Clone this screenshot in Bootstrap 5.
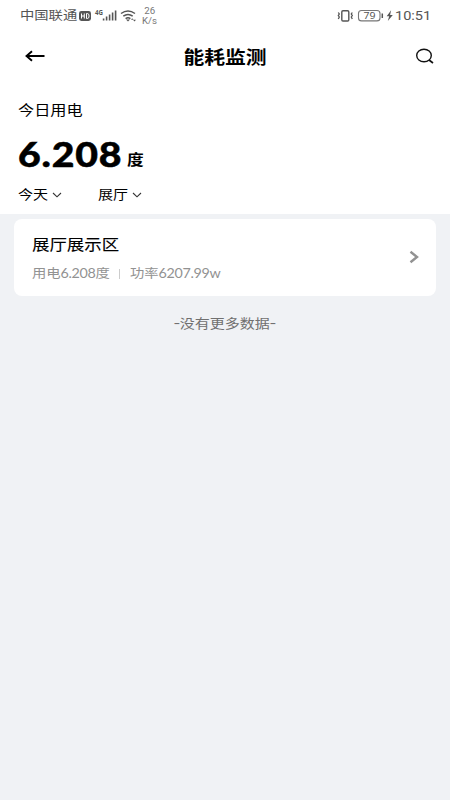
<!DOCTYPE html>
<html lang="zh-CN">
<head>
<meta charset="utf-8">
<meta name="viewport" content="width=device-width, initial-scale=1">
<title>能耗监测</title>
<link href="https://cdn.jsdelivr.net/npm/bootstrap@5.3.0/dist/css/bootstrap.min.css" rel="stylesheet">
<style>
body{background:#f0f2f5;font-family:Lato,"Noto Sans CJK SC",sans-serif;color:#000;min-height:800px;overflow:hidden}
svg{display:block;flex:none}
.wide{display:inline-block;white-space:nowrap;transform:scaleX(1.155);transform-origin:left center;line-height:1}
.wide-center{transform-origin:center}
.status{height:31px;padding-left:20px;padding-right:20px;color:#555;font-family:"Noto Sans","Noto Sans CJK SC",sans-serif}
.carrier{width:58px;font-size:12.4px;padding-top:2px}
.speed{width:14px;font-family:Roboto,sans-serif;font-size:8.4px;color:#777;margin-left:3px}
.speed span{line-height:10px}
.clock-box{font-family:Roboto,sans-serif;width:35px;font-size:12.6px;padding-top:2px}
.titlebar{height:49px;padding:1px 15px 0 25px}
.titlebar h1{font-size:18px;font-weight:700;margin:1px 11px 0 0}
.summary{height:133.5px;padding:21px 18px 0}
.caption-text{font-size:14px;height:18px;line-height:18px}
.summary .caption-text{display:block;width:60px}
.reading{height:42px;margin-top:13px}
.figure-num{font-size:35px;font-weight:900;width:108.5px;line-height:42px;letter-spacing:.7px;transform:scaleX(1.12);-webkit-text-stroke:.5px}
.unit{font-size:14.5px;font-weight:700;line-height:16px;margin-bottom:6px}
.filters{height:20px;margin-top:11px;font-size:13px}
.filter-label{width:34px}
.filter{width:80px}
.area-card{margin:5px 14px 0;height:77.5px;border-radius:8px;padding:0 17px 0 18px}
.area-name{font-size:15.1px;height:20px;line-height:20px;-webkit-text-stroke:.1px}
.meta{font-size:12.4px;color:#929292;margin-top:9px;height:18px}
.meta .energy{width:87px}
.meta .wide{display:block}
.num{letter-spacing:-.3px}
.rule{width:1px;height:10px;background:#ccc;margin-right:10px}
.end-note{font-size:13px;color:#707070;margin-top:17.5px;height:18px}
.dash{display:inline-block;transform:scaleX(1.3)}
</style>
<script src="https://cdn.jsdelivr.net/npm/bootstrap@5.3.0/dist/js/bootstrap.bundle.min.js"></script>
</head>
<body>
<header class="bg-white">
  <div class="status d-flex align-items-center">
    <div class="carrier"><span class="wide">中国联通</span></div>
    <svg width="62" height="18" viewBox="78 6.5 62 18">
      <rect x="79" y="10.5" width="12" height="10" rx="2.4" fill="#555"/>
      <path d="M81.5 13v5M84.3 13v5M81.5 15.5h2.8M86.5 13v5h.8q1.8 0 1.8-2.5t-1.8-2.5z" fill="none" stroke="#fff"/>
      <text x="95" y="14" font-size="6.5" font-weight="700" fill="#555" textLength="8" lengthAdjust="spacingAndGlyphs">4G</text>
      <path d="M103.6 18v2M106.6 16v4M109.6 14v6M112.6 12v8M115.6 10v10" stroke="#555" stroke-width="1.6"/>
      <g fill="none" stroke="#555" stroke-width="1.5"><path d="M121 13q7-5 14 0M123.3 15.6q4.7-3.4 9.4 0M125.6 18.1q2.4-1.8 4.8 0"/></g>
      <path d="M126 19h4l-2 2zM131 19.3l1.2-1.5 1.2 1.5zM133 19.3h3l-1.5 1.6z" fill="#555"/>
    </svg>
    <div class="speed d-flex flex-column align-items-center me-auto"><span class="wide wide-center">26</span><span class="wide wide-center">K/s</span></div>
    <svg width="58" height="18" viewBox="336.5 6.5 58 18">
      <rect x="341.3" y="10.3" width="7" height="10.2" rx="1.2" fill="none" stroke="#555" stroke-width="1.4"/>
      <path d="M337.8 12l1 1.5-1 1.5 1 1.5-1 2M351.8 12l-1 1.5 1 1.5-1 1.5 1 2" fill="none" stroke="#555" stroke-width="1.3"/>
      <rect x="358" y="10" width="21.5" height="10.4" rx="3" fill="none" stroke="#777" stroke-width="1.1"/>
      <path d="M381.8 13v4.5" stroke="#555" stroke-width="1.5"/>
      <text x="363" y="18.8" font-size="9.5" fill="#555" textLength="12" lengthAdjust="spacingAndGlyphs">79</text>
      <path d="M390.6 9.8l-4.4 6h2.5l-1.4 4.8 5-6.2h-2.7z" fill="#555"/>
    </svg>
    <div class="clock-box"><span class="wide">10:51</span></div>
  </div>
  <div class="titlebar d-flex align-items-center justify-content-between">
    <svg width="20" height="14" viewBox="0 0 20 14"><path d="M1.5 7H19.5M7 2.2L1.5 7 7 11.8" fill="none" stroke="#000" stroke-width="1.9"/></svg>
    <h1 class="wide wide-center">能耗监测</h1>
    <svg width="20" height="18" viewBox="0 0 20 18"><ellipse cx="9" cy="8.5" rx="7.3" ry="6.3" fill="none" stroke="#111" stroke-width="1.4"/><path d="M14 13l4 3" stroke="#111" stroke-width="1.6"/></svg>
  </div>
  <section class="summary">
    <div class="wide caption-text">今日用电</div>
    <div class="reading d-flex align-items-end">
      <span class="wide figure-num">6.208</span>
      <span class="wide unit">度</span>
    </div>
    <div class="filters d-flex align-items-center">
      <div class="filter d-flex align-items-center"><div class="filter-label"><span class="wide">今天</span></div>
        <svg width="10" height="8" viewBox="0 0 10 8"><path d="M1 2l4 3.8L9 2" fill="none" stroke="#333" stroke-width="1.1"/></svg></div>
      <div class="filter d-flex align-items-center"><div class="filter-label"><span class="wide">展厅</span></div>
        <svg width="10" height="8" viewBox="0 0 10 8"><path d="M1 2l4 3.8L9 2" fill="none" stroke="#333" stroke-width="1.1"/></svg></div>
    </div>
  </section>
</header>
<main>
  <article class="area-card bg-white d-flex align-items-center justify-content-between">
    <div>
      <div class="wide area-name">展厅展示区</div>
      <div class="meta d-flex align-items-center">
        <div class="energy"><span class="wide">用电<span class="num">6.208</span>度</span></div>
        <div class="rule"></div>
        <span class="wide">功率<span class="num">6207.99w</span></span>
      </div>
    </div>
    <svg width="10" height="14" viewBox="0 0 10 14"><path d="M1.5 1.8L8 7 1.5 12.2" fill="none" stroke="#929292" stroke-width="2.4"/></svg>
  </article>
  <div class="end-note text-center"><span class="wide wide-center"><span class="dash">-</span>没有更多数据<span class="dash">-</span></span></div>
</main>
</body>
</html>
